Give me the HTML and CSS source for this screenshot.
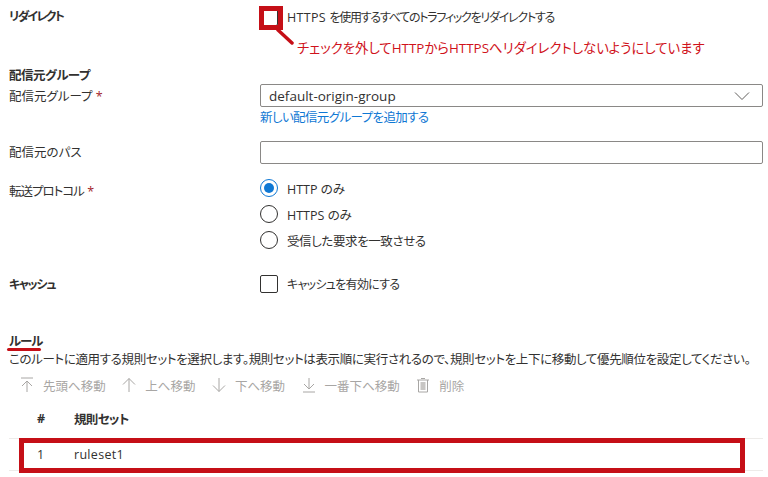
FILE: index.html
```html
<!DOCTYPE html>
<html lang="ja">
<head>
  <meta charset="UTF-8">
  <title>ルート設定</title>
  <link rel="stylesheet" href="styles.css">
</head>
<body>
  <div class="page">
    <div class="row row-redirect">
      <div class="label strong narrow redirect-name">リダイレクト</div>
      <div class="field">
        <label class="option">
          <span class="check"></span>
          <span class="opt-redirect"><span class="latin">HTTPS </span>を使用するすべてのトラフィックをリダイレクトする</span>
        </label>
        <div class="note">チェックを外してHTTPからHTTPSへリダイレクトしないようにしています</div>
      </div>
    </div>

    <div class="group-title strong">配信元グループ</div>
    <div class="row row-group">
      <div class="label">配信元グループ <span class="req">*</span></div>
      <div class="field">
        <div class="select">
          <span>default-origin-group</span>
          <svg class="chevron" width="16" height="8" viewBox="0 0 16 8"><path d="M1 0.5 L8 7.5 L15 0.5" fill="none" stroke="#605e5c" stroke-width="1"/></svg>
        </div>
        <a class="link" href="#">新しい配信元グループを追加する</a>
      </div>
    </div>

    <div class="row row-path">
      <div class="label">配信元のパス</div>
      <div class="field"><div class="input"></div></div>
    </div>

    <div class="row row-protocol">
      <div class="label"><span class="proto-name">転送プロトコル</span> <span class="req">*</span></div>
      <div class="field radios">
        <label class="option"><span class="radio on"></span><span>HTTP のみ</span></label>
        <label class="option"><span class="radio"></span><span>HTTPS のみ</span></label>
        <label class="option"><span class="radio"></span><span class="opt-match">受信した要求を一致させる</span></label>
      </div>
    </div>

    <div class="row row-cache">
      <div class="label strong narrow">キャッシュ</div>
      <div class="field">
        <label class="option"><span class="check"></span><span class="opt-cache">キャッシュを有効にする</span></label>
      </div>
    </div>

    <div class="rules-title strong">ルール</div>
    <div class="rules-desc">このルートに適用する規則セットを選択します。規則セットは表示順に実行されるので、規則セットを上下に移動して優先順位を設定してください。</div>

    <div class="toolbar">
      <span class="tool">
        <svg width="14" height="16" viewBox="0 0 14 16"><path d="M1 1 H13 M7 15 V4 M2 9 L7 4 L12 9" fill="none" stroke="#a8a6a4"/></svg>先頭へ移動
      </span>
      <span class="tool">
        <svg width="14" height="16" viewBox="0 0 14 16"><path d="M7 15 V1.5 M1 7.5 L7 1.5 L13 7.5" fill="none" stroke="#a8a6a4"/></svg>上へ移動
      </span>
      <span class="tool">
        <svg width="14" height="16" viewBox="0 0 14 16"><path d="M7 1 V14.5 M1 8.5 L7 14.5 L13 8.5" fill="none" stroke="#a8a6a4"/></svg>下へ移動
      </span>
      <span class="tool">
        <svg width="14" height="16" viewBox="0 0 14 16"><path d="M7 1 V12 M2 7 L7 12 L12 7 M1 15 H13" fill="none" stroke="#a8a6a4"/></svg>一番下へ移動
      </span>
      <span class="tool">
        <svg width="14" height="16" viewBox="0 0 14 16"><path d="M5 1.5 H9 M1 3 H13 M2.5 3 V15 H11.5 V3" fill="none" stroke="#a8a6a4"/><rect x="4.5" y="5" width="5" height="8" fill="#c8c6c4"/></svg>削除
      </span>
    </div>

    <div class="table">
      <div class="thead strong"><span class="col-num">#</span><span class="col-name">規則セット</span></div>
      <div class="trow"><span class="col-num">1</span><span class="ruleset">ruleset1</span></div>
    </div>
  </div>

  <!-- 赤い注釈 -->
  <div class="mark mark-check"></div>
  <svg class="mark mark-line" width="20" height="20" viewBox="0 0 20 20"><path d="M2 2 L16 15" stroke="#c50f17" stroke-width="3.5" stroke-linecap="round"/></svg>
  <div class="mark mark-under"></div>
  <div class="mark mark-row"></div>
</body>
</html>
```

FILE: styles.css
```css
* {
  box-sizing: border-box;
}
html, body {
  margin: 0;
  height: 477px;
  overflow: hidden;
  background-color: #fff;
}
body {
  position: relative;
  font-family: "Open Sans", "Noto Sans CJK JP", sans-serif;
  font-size: 12.5px;
  font-feature-settings: "palt";
  color: #323130;
}
.page {
  padding: 0 5px 0 9px;
}
.row {
  display: grid;
  grid-template-columns: 251px 503px;
}
.strong {
  font-weight: 700;
}
.narrow {
  font-size: 12px;
  letter-spacing: -1.3px;
}
.redirect-name {
  letter-spacing: -1.8px;
}
.label {
  line-height: 18px;
}
.req {
  color: #a4262c;
}
.option {
  display: flex;
  align-items: center;
  gap: 9px;
  height: 20px;
}
.opt-redirect {
  font-size: 12px;
  letter-spacing: -1.25px;
  white-space: nowrap;
}
.opt-redirect .latin {
  font-size: 12.5px;
  letter-spacing: 0.3px;
}
.opt-match {
  letter-spacing: -0.4px;
}
.opt-cache {
  font-size: 12px;
  letter-spacing: -0.7px;
}
.proto-name {
  letter-spacing: -1px;
}
.check {
  width: 18px;
  height: 18px;
  border: 1px solid #323130;
  border-radius: 2px;
  flex: none;
}
.radio {
  width: 18px;
  height: 18px;
  border: 1px solid #323130;
  border-radius: 50%;
  flex: none;
  background-color: #fff;
}
.radio.on {
  border-color: #0f78d4;
  padding: 3px;
  background-color: #0f78d4;
  background-clip: content-box;
}
.row-redirect {
  padding-top: 7px;
}
.row-redirect .label {
  padding-top: 1px;
}
.note {
  margin: 11px 0 0 37px;
  color: #d0121b;
  font-size: 13.4px;
  line-height: 20px;
  white-space: nowrap;
}
.group-title {
  margin-top: 9px;
  line-height: 18px;
  letter-spacing: -0.5px;
}
.row-group {
  margin-top: -1px;
}
.row-group .label {
  padding-top: 4px;
}
.select {
  height: 23px;
  border: 1px solid #8a8886;
  border-radius: 2px;
  padding: 0 12px 0 8px;
  display: flex;
  align-items: center;
  justify-content: space-between;
  font-size: 13.5px;
}
.link {
  display: block;
  margin-top: 2px;
  color: #0f78d4;
  text-decoration: none;
  line-height: 18px;
  letter-spacing: -0.6px;
}
.row-path {
  margin-top: 14px;
}
.row-path .label {
  padding-top: 3px;
}
.input {
  height: 23px;
  border: 1px solid #8a8886;
  border-radius: 2px;
}
.row-protocol {
  margin-top: 14px;
}
.row-protocol .label {
  padding-top: 5px;
}
.radios {
  display: flex;
  flex-direction: column;
  gap: 6px;
}
.row-cache {
  margin-top: 24px;
}
.row-cache .label {
  padding-top: 2px;
}
.rules-title {
  margin-top: 39px;
  line-height: 18px;
  letter-spacing: -1px;
}
.rules-desc {
  line-height: 18px;
  letter-spacing: -0.35px;
  white-space: nowrap;
}
.toolbar {
  display: flex;
  gap: 16.5px;
  margin: 6px 0 0 11px;
  color: #a8a6a4;
  height: 20px;
  align-items: center;
}
.tool {
  display: flex;
  align-items: center;
  gap: 9px;
}
.table {
  width: 754px;
}
.thead {
  display: flex;
  height: 43px;
  align-items: center;
  padding-top: 4px;
}
.col-num {
  width: 65px;
  padding-left: 28px;
}
.col-name {
  letter-spacing: -0.7px;
}
.ruleset {
  letter-spacing: 0.3px;
}
.trow {
  display: flex;
  height: 33px;
  align-items: center;
  border-top: 1px solid #edebe9;
  border-bottom: 1px solid #edebe9;
}
.mark {
  position: absolute;
}
.mark-check {
  left: 259px;
  top: 6px;
  width: 24px;
  height: 24px;
  border: 5px solid #c50f17;
}
.mark-line {
  left: 276px;
  top: 28px;
}
.mark-under {
  left: 7px;
  top: 348px;
  width: 34px;
  height: 3px;
  border-radius: 2px;
  background-color: #c50f17;
}
.mark-row {
  left: 19px;
  top: 438px;
  width: 726px;
  height: 35px;
  border: 5px solid #c50f17;
}
```
